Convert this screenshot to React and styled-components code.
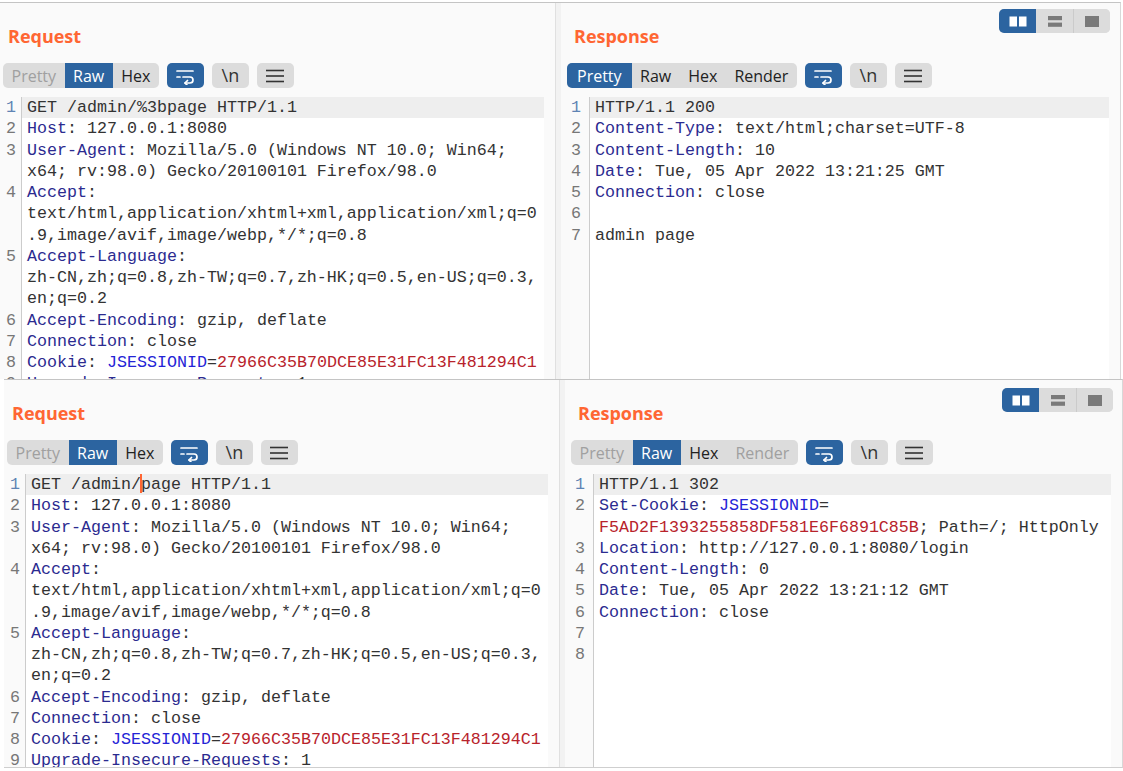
import React from "react";
import styled, { createGlobalStyle } from "styled-components";

const GlobalStyle = createGlobalStyle`
  html, body { margin: 0; padding: 0; background: #ffffff; }
  body { font-family: "Open Sans", "Noto Sans", sans-serif; }
  * { box-sizing: border-box; }
`;

const Page = styled.div`
  width: 1123px;
  height: 771px;
  overflow: hidden;
  background: #ffffff;
  display: flex;
  flex-direction: column;
`;

const Window = styled.section`
  display: flex;
  flex: none;
  width: ${(p) => p.$w}px;
  height: ${(p) => p.$h}px;
  margin-top: ${(p) => p.$mt}px;
  margin-left: ${(p) => p.$ml}px;
  background: #fafafa;
  border-top: 1px solid #c4c4c4;
  border-right: 1px solid #d8d8d8;
  border-bottom: ${(p) => (p.$bottom ? "1px solid #cfcfcf" : "none")};
  overflow: hidden;
`;

const Pane = styled.div`
  display: flex;
  flex-direction: column;
  flex: ${(p) => (p.$w ? "none" : "1")};
  width: ${(p) => (p.$w ? `${p.$w}px` : "auto")};
  padding-left: ${(p) => p.$pad}px;
  min-width: 0;
`;

const Divider = styled.div`
  flex: none;
  width: 6px;
  background: #f2f2f2;
  border-left: 1px solid #e0e0e0;
`;

const HeaderRow = styled.div`
  display: flex;
  align-items: flex-start;
  height: 44px;
  flex: none;
`;

const Title = styled.h2`
  margin: 22px 0 0 ${(p) => p.$inset}px;
  font-family: "Open Sans", "Noto Sans", sans-serif;
  font-size: 18px;
  line-height: 22px;
  font-weight: 700;
  color: #ff6633;
`;

const LayoutToggle = styled.div`
  display: flex;
  margin: ${(p) => p.$top}px ${(p) => p.$right}px 0 auto;
  height: 24px;
  border-radius: 5px;
  overflow: hidden;
  background: #dcdcdc;
`;

const ToggleSeg = styled.div`
  width: 37px;
  height: 24px;
  display: flex;
  align-items: center;
  justify-content: center;
  background: ${(p) => (p.$on ? "#2c64a0" : "#dcdcdc")};
  border-left: ${(p) => (p.$sep ? "1px solid #cbcbcb" : "none")};
`;

const Toolbar = styled.div`
  display: flex;
  align-items: center;
  gap: 8px;
  height: 25px;
  margin-top: 16px;
  flex: none;
`;

const TabGroup = styled.div`
  display: flex;
  height: 25px;
  background: #dcdcdc;
  border-radius: 5px;
  overflow: hidden;
`;

const Tab = styled.div`
  display: flex;
  align-items: center;
  padding: 0 ${(p) => p.$px}px;
  font-size: 16px;
  background: ${(p) => (p.$active ? "#2c64a0" : "transparent")};
  color: ${(p) => (p.$active ? "#ffffff" : p.$disabled ? "#a0a0a0" : "#222222")};
`;

const IconButton = styled.div`
  width: 37px;
  height: 25px;
  border-radius: 5px;
  display: flex;
  align-items: center;
  justify-content: center;
  background: ${(p) => (p.$active ? "#2c64a0" : "#dcdcdc")};
  color: #333333;
  font-size: 18px;
  line-height: 25px;
`;

const CodeArea = styled.div`
  display: flex;
  flex: 1;
  margin-top: 9px;
  margin-right: 11px;
  min-height: 0;
  overflow: hidden;
  font-family: "Liberation Mono", "Courier New", monospace;
  font-size: 16.67px;
  line-height: 21.25px;
`;

const Gutter = styled.div`
  flex: none;
  width: ${(p) => p.$w}px;
  padding-right: ${(p) => p.$pr}px;
  border-right: 1px solid #cccccc;
  text-align: right;
`;

const LineNo = styled.div`
  height: 21.25px;
  color: ${(p) => (p.$active ? "#5f84b4" : "#777777")};
`;

const Lines = styled.div`
  flex: 1;
  min-width: 0;
  background: #ffffff;
`;

const Row = styled.div`
  height: 21.25px;
  padding-left: 5px;
  white-space: pre;
  color: #333333;
  background: ${(p) => (p.$active ? "#eeeeee" : "transparent")};
`;

const Seg = styled.span`
  color: ${(p) =>
    ({ k: "#2b2b90", c: "#2424d6", v: "#b8232b", p: "#333333" }[p.$kind])};
`;

const Caret = styled.span`
  display: inline-block;
  width: 2px;
  height: 19px;
  margin: 0 -1px;
  vertical-align: -4px;
  background: #ff6633;
`;

/* ---------- icons ---------- */
const WrapIcon = () => (
  <svg width="20" height="18" viewBox="0 0 20 18" fill="none" stroke="#ffffff" strokeWidth="1.7" strokeLinecap="round" strokeLinejoin="round">
    <path d="M2 4 H18" />
    <path d="M2 10 H5" />
    <path d="M8 10 H15 a3 3 0 0 1 0 6 H10" />
    <path d="M12.5 13.5 L10 16 L12.5 18.5" />
  </svg>
);

const MenuIcon = () => (
  <svg width="20" height="16" viewBox="0 0 20 16" fill="none" stroke="#333333" strokeWidth="1.6">
    <path d="M1 2.5 H19" />
    <path d="M1 8 H19" />
    <path d="M1 13.5 H19" />
  </svg>
);

const SplitIcon = () => (
  <svg width="18" height="11" viewBox="0 0 18 11">
    <rect x="0.5" y="0.5" width="7.5" height="10" fill="#ffffff" />
    <rect x="10" y="0.5" width="7.5" height="10" fill="#ffffff" />
  </svg>
);

const StackIcon = () => (
  <svg width="14" height="11" viewBox="0 0 14 11">
    <rect x="0" y="0" width="14" height="4.2" fill="#7a7a7a" />
    <rect x="0" y="6.6" width="14" height="4.2" fill="#7a7a7a" />
  </svg>
);

const SingleIcon = () => (
  <svg width="14" height="11" viewBox="0 0 14 11">
    <rect x="0" y="0" width="14" height="11" fill="#7a7a7a" />
  </svg>
);

/* ---------- data ---------- */
const P = (t) => ["p", t];
const K = (t) => ["k", t];
const C = (t) => ["c", t];
const V = (t) => ["v", t];

const requestRows = (first) => [
  { n: 1, active: true, segs: first },
  { n: 2, segs: [K("Host"), P(": 127.0.0.1:8080")] },
  { n: 3, segs: [K("User-Agent"), P(": Mozilla/5.0 (Windows NT 10.0; Win64;")] },
  { segs: [P("x64; rv:98.0) Gecko/20100101 Firefox/98.0")] },
  { n: 4, segs: [K("Accept"), P(":")] },
  { segs: [P("text/html,application/xhtml+xml,application/xml;q=0")] },
  { segs: [P(".9,image/avif,image/webp,*/*;q=0.8")] },
  { n: 5, segs: [K("Accept-Language"), P(":")] },
  { segs: [P("zh-CN,zh;q=0.8,zh-TW;q=0.7,zh-HK;q=0.5,en-US;q=0.3,")] },
  { segs: [P("en;q=0.2")] },
  { n: 6, segs: [K("Accept-Encoding"), P(": gzip, deflate")] },
  { n: 7, segs: [K("Connection"), P(": close")] },
  { n: 8, segs: [K("Cookie"), P(": "), C("JSESSIONID"), P("="), V("27966C35B70DCE85E31FC13F481294C1")] },
  { n: 9, segs: [K("Upgrade-Insecure-Requests"), P(": 1")] },
];

const topRequest = requestRows([P("GET /admin/%3bpage HTTP/1.1")]);
const bottomRequest = requestRows([P("GET /admin/"), ["caret", ""], P("page HTTP/1.1")]);

const topResponse = [
  { n: 1, active: true, segs: [P("HTTP/1.1 200")] },
  { n: 2, segs: [K("Content-Type"), P(": text/html;charset=UTF-8")] },
  { n: 3, segs: [K("Content-Length"), P(": 10")] },
  { n: 4, segs: [K("Date"), P(": Tue, 05 Apr 2022 13:21:25 GMT")] },
  { n: 5, segs: [K("Connection"), P(": close")] },
  { n: 6, segs: [] },
  { n: 7, segs: [P("admin page")] },
];

const bottomResponse = [
  { n: 1, active: true, segs: [P("HTTP/1.1 302")] },
  { n: 2, segs: [K("Set-Cookie"), P(": "), C("JSESSIONID"), P("=")] },
  { segs: [V("F5AD2F1393255858DF581E6F6891C85B"), P("; Path=/; HttpOnly")] },
  { n: 3, segs: [K("Location"), P(": http://127.0.0.1:8080/login")] },
  { n: 4, segs: [K("Content-Length"), P(": 0")] },
  { n: 5, segs: [K("Date"), P(": Tue, 05 Apr 2022 13:21:12 GMT")] },
  { n: 6, segs: [K("Connection"), P(": close")] },
  { n: 7, segs: [] },
  { n: 8, segs: [] },
];

/* ---------- parts ---------- */
const Code = ({ rows, gutter, gutterPad }) => (
  <CodeArea>
    <Gutter $w={gutter} $pr={gutterPad}>
      {rows.map((r, i) => (
        <LineNo key={i} $active={r.active}>{r.n ?? ""}</LineNo>
      ))}
    </Gutter>
    <Lines>
      {rows.map((r, i) => (
        <Row key={i} $active={r.active}>
          {r.segs.map(([kind, text], j) =>
            kind === "caret" ? <Caret key={j} /> : <Seg key={j} $kind={kind}>{text}</Seg>
          )}
        </Row>
      ))}
    </Lines>
  </CodeArea>
);

const EditorToolbar = ({ tabs }) => (
  <Toolbar>
    <TabGroup>
      {tabs.map((t) => (
        <Tab key={t.label} $active={t.active} $disabled={t.disabled} $px={t.px ?? 8.5}>
          {t.label}
        </Tab>
      ))}
    </TabGroup>
    <IconButton $active>
      <WrapIcon />
    </IconButton>
    <IconButton>\n</IconButton>
    <IconButton>
      <MenuIcon />
    </IconButton>
  </Toolbar>
);

const Toggle = ({ top, right }) => (
  <LayoutToggle $top={top} $right={right}>
    <ToggleSeg $on>
      <SplitIcon />
    </ToggleSeg>
    <ToggleSeg>
      <StackIcon />
    </ToggleSeg>
    <ToggleSeg $sep>
      <SingleIcon />
    </ToggleSeg>
  </LayoutToggle>
);

const Editor = ({ title, tabs, rows, gutter, gutterPad, inset, toggle, width, pad }) => (
  <Pane $w={width} $pad={pad}>
    <HeaderRow>
      <Title $inset={inset}>{title}</Title>
      {toggle}
    </HeaderRow>
    <EditorToolbar tabs={tabs} />
    <Code rows={rows} gutter={gutter} gutterPad={gutterPad} />
  </Pane>
);

export default function App() {
  return (
    <Page>
      <GlobalStyle />
      <Window $w={1121} $h={377} $mt={2} $ml={0}>
        <Editor
          width={555}
          pad={3}
          inset={5}
          title="Request"
          tabs={[
            { label: "Pretty", disabled: true },
            { label: "Raw", active: true },
            { label: "Hex" },
          ]}
          rows={topRequest}
          gutter={19}
          gutterPad={5}
        />
        <Divider />
        <Editor
          pad={6}
          inset={7}
          title="Response"
          toggle={<Toggle top={6} right={10} />}
          tabs={[
            { label: "Pretty", active: true, px: 10 },
            { label: "Raw" },
            { label: "Hex" },
            { label: "Render" },
          ]}
          rows={topResponse}
          gutter={23}
          gutterPad={8}
        />
      </Window>
      <Window $w={1119} $h={389} $mt={0} $ml={4} $bottom>
        <Editor
          width={555}
          pad={3}
          inset={5}
          title="Request"
          tabs={[
            { label: "Pretty", disabled: true },
            { label: "Raw", active: true },
            { label: "Hex" },
          ]}
          rows={bottomRequest}
          gutter={19}
          gutterPad={5}
        />
        <Divider />
        <Editor
          pad={6}
          inset={7}
          title="Response"
          toggle={<Toggle top={8} right={9} />}
          tabs={[
            { label: "Pretty", disabled: true },
            { label: "Raw", active: true },
            { label: "Hex" },
            { label: "Render", disabled: true },
          ]}
          rows={bottomResponse}
          gutter={23}
          gutterPad={8}
        />
      </Window>
    </Page>
  );
}
